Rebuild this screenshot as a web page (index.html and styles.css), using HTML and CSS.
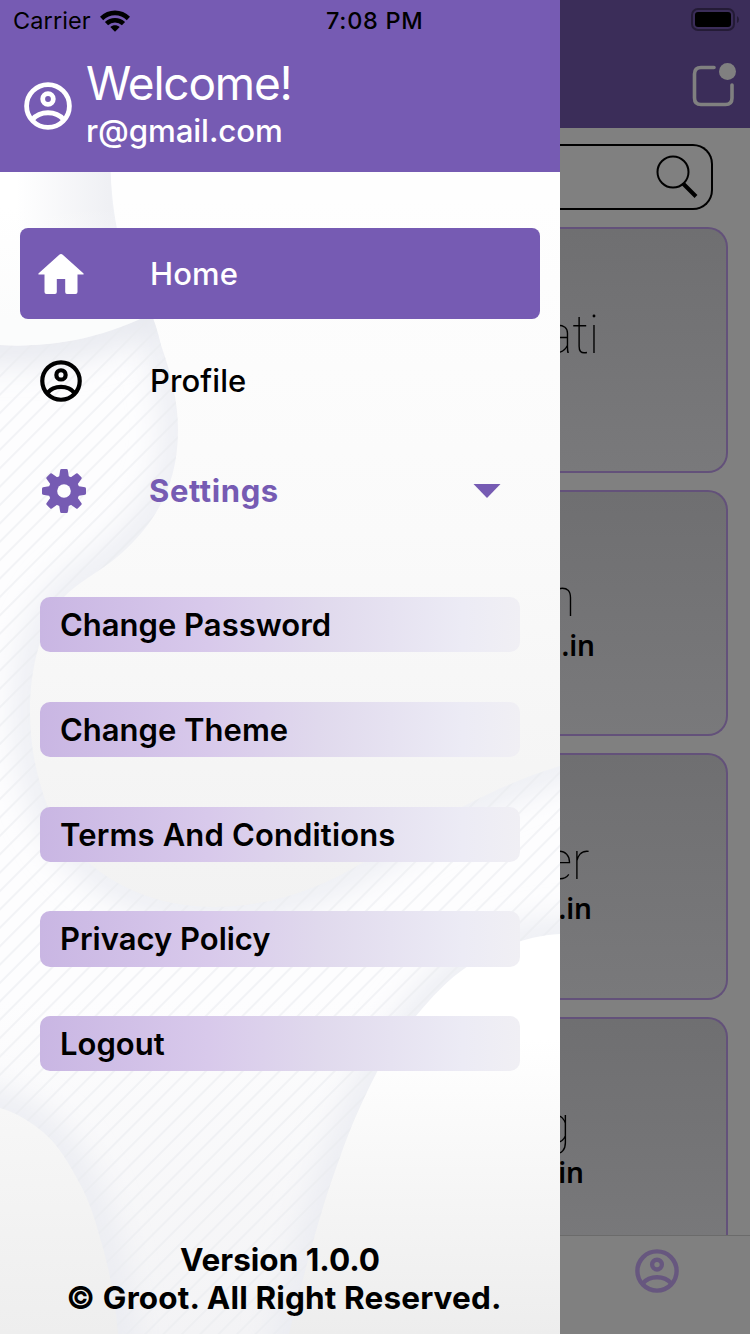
FILE: index.html
```html
<!DOCTYPE html>
<html lang="en">
<head>
<meta charset="utf-8">
<title>Menu</title>
<link rel="stylesheet" href="styles.css">
</head>
<body>
<svg class="defs" aria-hidden="true">
  <symbol id="user" viewBox="0 0 48 48">
    <g fill="none" stroke="currentColor" stroke-width="4.8">
      <circle cx="24" cy="24" r="21.4"/>
      <circle cx="24" cy="17" r="5.3"/>
      <path d="M8.5 37.5C16 28.5 32 28.5 39.5 37.5"/>
    </g>
  </symbol>
</svg>
<div class="app">
  <aside class="drawer">
    <svg class="art" viewBox="0 0 560 1334" aria-hidden="true">
      <defs>
        <linearGradient id="base" x1="0" y1="0" x2="0" y2="1"><stop offset=".15" stop-color="#fefefe"/><stop offset=".4" stop-color="#fafafa"/><stop offset=".68" stop-color="#f2f2f2"/></linearGradient>
        <linearGradient id="low" gradientUnits="userSpaceOnUse" x1="0" y1="1040" x2="0" y2="1334"><stop offset="0" stop-color="#fff"/><stop offset="1" stop-color="#ededed"/></linearGradient>
        <linearGradient id="wavefill" gradientUnits="userSpaceOnUse" x1="0" y1="1000" x2="0" y2="1334"><stop offset="0" stop-color="#fdfdfe"/><stop offset="1" stop-color="#f3f3f5"/></linearGradient>
        <linearGradient id="left" gradientUnits="userSpaceOnUse" x1="0" y1="1108" x2="0" y2="1334"><stop offset="0" stop-color="#f7f7f7"/><stop offset="1" stop-color="#eeeeee"/></linearGradient>
        <linearGradient id="cap" x1="0" y1="0" x2="1" y2="0"><stop offset=".1" stop-color="#fff"/><stop offset=".66" stop-color="#eff0f4"/><stop offset="1" stop-color="#f2f3f6"/></linearGradient>
        <linearGradient id="capfade" x1="0" y1="0" x2="0" y2="1"><stop offset=".2" stop-color="#fcfcfc" stop-opacity="0"/><stop offset=".85" stop-color="#fbfcfc"/></linearGradient>
        <pattern id="lines" width="13" height="13" patternUnits="userSpaceOnUse" patternTransform="rotate(-45)"><path d="M0 6H13" stroke="#eaebef" stroke-width="2" opacity=".55"/></pattern>
        <filter id="soft" filterUnits="userSpaceOnUse" x="-120" y="0" width="820" height="1460"><feGaussianBlur stdDeviation="16"/></filter>
        <path id="wave" d="M-60 100H109C109 190 113 230 130 270C145 298 155 318 161 345C172 376 178 403 178 430C178 482 158 519 125 550C103 571 80 580 64 597C40 626 30 670 30 710C30 748 37 778 47 805C58 832 71 849 89 863C124 893 168 907 214 907C268 907 318 890 364 862C400 844 432 824 464 806C495 790 527 776 560 766L640 740V934H560C524 936 493 950 468 966C447 980 432 997 416 1016C400 1036 389 1053 377 1072C360 1105 349 1131 339 1160C324 1200 310 1250 289 1334V1400H118V1334C115 1298 109 1267 100 1238C94 1214 86 1193 75 1175C65 1156 55 1142 43 1132C30 1121 15 1112 0 1108L-60 1090Z"/>
        <clipPath id="waveclip"><use href="#wave"/></clipPath>
      </defs>
      <rect width="560" height="1334" fill="url(#base)"/>
      <path d="M560 920L420 980L330 1120L260 1334H560Z" fill="url(#low)"/>
      <path d="M0 1090H60L150 1334H0Z" fill="url(#left)"/>
      <g clip-path="url(#waveclip)">
        <use href="#wave" fill="url(#wavefill)"/>
        <use href="#wave" fill="none" stroke="#e7e9f0" stroke-width="26" filter="url(#soft)"/>
        <path d="M-60 345H0C60 350 115 335 165 305" fill="none" stroke="#e5e7ee" stroke-width="34" filter="url(#soft)"/>
        <rect y="300" width="560" height="1034" fill="url(#lines)"/>
        <path d="M0 172H111C111 200 113 218 118 240L165 306C115 335 60 348 0 345Z" fill="url(#cap)"/>
        <path d="M0 172H111C111 200 113 218 118 240L165 306C115 335 60 348 0 345Z" fill="url(#capfade)"/>
      </g>
    </svg>
    <header class="head">
      <div class="status">
        <span class="carrier">Carrier</span>
        <svg class="wifi" viewBox="0 0 30 22"><g fill="none" stroke="#000" stroke-width="4.6"><path d="M1.6 8.5C9.3 1 20.7 1 28.4 8.5"/><path d="M6.5 13.6C11.2 9.1 18.8 9.1 23.5 13.6"/></g><path d="M10.3 17.1C13 14.7 17 14.7 19.7 17.1L15 21.8Z"/></svg>
        <span class="time">7:08 PM</span>
      </div>
      <div class="account">
        <svg class="avatar"><use href="#user"/></svg>
        <div><div class="welcome">Welcome!</div><div class="mail">r@gmail.com</div></div>
      </div>
    </header>
    <nav class="menu">
      <a class="row home"><svg class="i-home" viewBox="0 0 46 40"><path fill="#fff" d="M23 0Q24 0 25 1L45.3 19.2Q46.5 20.5 44.5 20.5H39.5V38Q39.5 40 37.5 40H29Q27.2 40 27.2 38V25H18.8V38Q18.8 40 17 40H8.5Q6.5 40 6.5 38V20.5H1.5Q-.5 20.5.7 19.2L21 1Q22 0 23 0Z"/></svg><span>Home</span></a>
      <a class="row profile"><svg class="i-user"><use href="#user"/></svg><span>Profile</span></a>
      <a class="row settings"><svg class="i-gear" viewBox="-22 -22 44 44"><g fill="currentColor"><g id="teeth"><path id="tooth" d="M-5.2-12L-3.8-21Q-3.6-22-2.6-22H2.6Q3.6-22 3.8-21L5.2-12V12L3.8 21Q3.6 22 2.6 22H-2.6Q-3.6 22-3.8 21L-5.2 12Z"/><use href="#tooth" transform="rotate(90)"/></g><use href="#teeth" transform="rotate(45)"/><circle r="15.5"/></g><circle r="6.8" fill="#fdfdfe"/></svg><span>Settings</span><svg class="caret" viewBox="0 0 28 14"><path fill="currentColor" d="M.5 0H27.5L14 14Z"/></svg></a>
    </nav>
    <ul class="sub">
      <li>Change Password</li><li>Change Theme</li><li class="terms">Terms And Conditions</li><li>Privacy Policy</li><li>Logout</li>
    </ul>
    <footer class="foot"><div class="ver">Version 1.0.0</div><div class="copy">© Groot. All Right Reserved.</div></footer>
  </aside>
  <main class="behind">
    <header class="bar">
      <svg class="battery" viewBox="0 0 48 23"><rect x="1" y="1" width="42" height="21" rx="6" fill="none" stroke="#241b36" stroke-width="2"/><rect x="4" y="4" width="36" height="15" rx="3"/><path d="M46 8Q48 9 48 11.5T46 15Z" fill="#241b36"/></svg>
      <svg class="notify" viewBox="0 0 44 44"><path d="M22 4.5H9Q2.5 4.5 2.5 11V35Q2.5 41.5 9 41.5H33.5Q40 41.5 40 35V22" fill="none" stroke="#808080" stroke-width="3.6" stroke-linecap="round"/><circle cx="35.5" cy="8.5" r="8.5" fill="#808080"/></svg>
    </header>
    <div class="search"><svg class="lens" viewBox="0 0 42 43"><circle cx="17" cy="17" r="15.5" fill="none" stroke="#000" stroke-width="2"/><path d="M27 28.5L40 41.5" stroke="#000" stroke-width="4"/></svg></div>
    <section class="cards">
      <article class="card c1"><div class="name">ati</div></article>
      <article class="card c2"><div class="name">n</div><div class="site">.in</div></article>
      <article class="card c3"><div class="name">er</div><div class="site">.in</div></article>
      <article class="card c4"><div class="name">g</div><div class="site">.in</div></article>
    </section>
    <footer class="tabs"><svg class="tabuser"><use href="#user"/></svg></footer>
  </main>
</div>
</body>
</html>
```
FILE: styles.css
```css
* { box-sizing: border-box; }
body { margin: 0; font-family: Inter, "Liberation Sans", sans-serif; color: #000; }
svg { display: block; flex: none; }
.defs { position: absolute; width: 0; height: 0; }
.app { display: grid; grid-template-columns: 560px 190px; width: 750px; height: 1334px; overflow: hidden; }
.drawer { position: relative; z-index: 0; display: flex; flex-direction: column; height: 1334px; }
.art { position: absolute; inset: 0; z-index: -1; width: 560px; height: 1334px; }
.head { height: 172px; background: #765bb3; }
.status { display: flex; align-items: center; height: 40px; padding: 1px 0 0 13px; font-size: 23.5px; line-height: 39px; }
.carrier { width: 87px; letter-spacing: .1px; }
.wifi { width: 30px; height: 22px; }
.time { margin-left: 196px; font-weight: 500; letter-spacing: .7px; white-space: nowrap; }
.account { display: flex; padding-left: 24px; color: #fff; }
.avatar { width: 48px; height: 48px; margin: 42px 14px 0 0; }
.welcome { height: 62px; padding-top: 15px; font-size: 46px; line-height: 56px; letter-spacing: -1.2px; }
.mail { height: 40px; padding-top: 9px; font-size: 31.3px; line-height: 40px; font-weight: 450; letter-spacing: -.1px; }
.menu { padding: 56px 20px 0; }
.row { display: flex; align-items: center; font-size: 31px; line-height: 40px; font-weight: 450; letter-spacing: .1px; }
.home { height: 91px; border-radius: 8px; background: #765bb3; color: #fff; padding-left: 18px; }
.i-home { width: 46px; height: 40px; margin-right: 66px; }
.profile { height: 124px; padding-left: 20px; }
.i-user { width: 42px; height: 42px; margin-right: 68px; }
.settings { height: 96px; padding-left: 22px; font-weight: 650; letter-spacing: .6px; color: #765bb3; }
.i-gear { width: 44px; height: 44px; margin-right: 63px; }
.settings span { width: 324px; }
.caret { width: 28px; height: 14px; }
.sub { display: flex; flex-direction: column; gap: 49.5px; list-style: none; margin: 58px 40px 0; padding: 0; }
.sub li { height: 55.3px; padding-left: 20px; border-radius: 10px; background: linear-gradient(90deg, #c9b6e3, #d8c9eb 35%, #e0d9ed 58%, #ecebf5 88%, #f0eff4); font-size: 31px; line-height: 55px; font-weight: 560; }
.sub .terms { letter-spacing: .15px; }
.foot { margin-top: auto; height: 94px; padding-top: 1px; text-align: center; font-size: 31.5px; font-weight: 650; line-height: 38px; white-space: nowrap; }
.copy { padding-left: 8px; letter-spacing: .15px; }
.behind { display: flex; flex-direction: column; width: 190px; height: 1334px; overflow: hidden; background: #808080; }
.bar { height: 128px; padding-top: 8px; background: #3b2d59; }
.battery { width: 48px; height: 23px; margin-left: 131px; }
.notify { width: 44px; height: 44px; margin: 32px 0 0 132px; }
.search { width: 153px; height: 66px; margin-top: 16px; border: 2px solid #000; border-left: 0; border-radius: 0 20px 20px 0; padding: 9px 0 0 96px; }
.lens { width: 42px; height: 43px; }
.cards { display: flex; flex-direction: column; gap: 17px; height: 1025px; padding-top: 17px; overflow: hidden; }
.card { flex: none; width: 168px; height: 246.2px; border: 2px solid #63517a; border-left: 0; border-radius: 0 20px 20px 0; background: linear-gradient(#6f6f71, #79797b); padding-top: 80px; display: flex; flex-direction: column; align-items: flex-end; }
.name { font-family: Roboto, sans-serif; font-size: 53px; font-weight: 250; line-height: 52px; height: 56px; letter-spacing: -.5px; }
.site { font-family: "Noto Sans", sans-serif; font-size: 28px; font-weight: 600; line-height: 34px; }
.c1 .name { margin-right: 127px; }
.c2 .name { margin-right: 151px; }
.c2 .site { margin-right: 131px; }
.c3 .name { margin-right: 137px; }
.c3 .site { margin-right: 134px; }
.c4 .name { margin-right: 156px; }
.c4 .site { margin-right: 142px; }
.tabs { flex: 1; border-top: 1px solid #6b6b6b; padding: 13px 0 0 75px; color: #67577f; }
.tabuser { width: 44px; height: 44px; }
```
